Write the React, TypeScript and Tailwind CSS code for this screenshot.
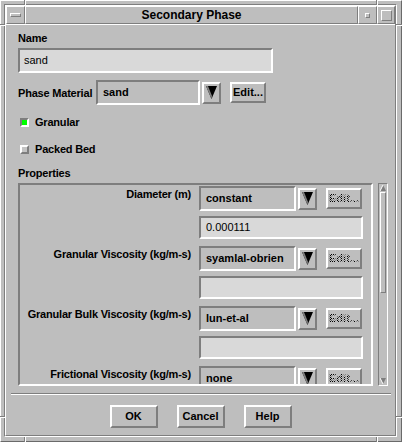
import React from "react"

// Motif-style bevels
const raised2 = "border-2 border-t-white border-l-white border-r-[#7e7e7e] border-b-[#7e7e7e]"
const sunken2 = "border-2 border-t-[#7e7e7e] border-l-[#7e7e7e] border-r-white border-b-white"
const raised1 = "border border-t-white border-l-white border-r-[#7e7e7e] border-b-[#7e7e7e]"
const sunken1 = "border border-t-[#7e7e7e] border-l-[#7e7e7e] border-r-white border-b-white"

const stipple =
  "bg-[repeating-conic-gradient(#000_0%_25%,transparent_0%_50%)] bg-[length:2px_2px] bg-clip-text text-transparent"

function ArrowButton() {
  return (
    <div className={`w-[19px] h-[22px] ${raised2} flex items-center justify-center`}>
      <svg width="11" height="13" viewBox="0 0 11 13">
        <polygon points="0,0 11,0 5.5,13" fill="#000" />
        <polygon points="0,0 2,0 6,10 5.5,13" fill="#7e7e7e" />
      </svg>
    </div>
  )
}

function EditButton({ disabled }: { disabled?: boolean }) {
  return (
    <div
      className={`w-[36px] h-[21px] ${raised2} flex items-center justify-center text-[11px] font-bold leading-none`}
    >
      <span className={disabled ? stipple : ""}>Edit...</span>
    </div>
  )
}

const rows = [
  { label: "Diameter (m)", value: "constant", field: "0.000111" },
  { label: "Granular Viscosity (kg/m-s)", value: "syamlal-obrien", field: "" },
  { label: "Granular Bulk Viscosity (kg/m-s)", value: "lun-et-al", field: "" },
  { label: "Frictional Viscosity (kg/m-s)", value: "none", field: "" },
]

function Tick({ className }: { className: string }) {
  return <div className={`absolute ${className}`} />
}

export default function App() {
  return (
    <div className="relative w-[402px] h-[442px] bg-[#bebebe] border border-t-white border-l-white border-r-[#6a6a6a] border-b-[#6a6a6a] pt-[3px] pl-[3px] pr-[4px] pb-[4px] font-['Liberation_Sans',Arial,Helvetica,sans-serif] text-black select-none">
      {/* frame corner ticks */}
      <Tick className="-top-px left-[23px] w-[2px] h-[5px] border-l border-l-[#7e7e7e] border-r border-r-white" />
      <Tick className="-top-px left-[375px] w-[2px] h-[5px] border-l border-l-[#7e7e7e] border-r border-r-white" />
      <Tick className="-bottom-px left-[23px] w-[2px] h-[5px] border-l border-l-[#7e7e7e] border-r border-r-white" />
      <Tick className="-bottom-px left-[375px] w-[2px] h-[5px] border-l border-l-[#7e7e7e] border-r border-r-white" />
      <Tick className="-left-px top-[23px] h-[2px] w-[5px] border-t border-t-[#7e7e7e] border-b border-b-white" />
      <Tick className="-right-px top-[23px] h-[2px] w-[6px] border-t border-t-[#7e7e7e] border-b border-b-white" />
      <Tick className="-left-px top-[415px] h-[2px] w-[5px] border-t border-t-[#7e7e7e] border-b border-b-white" />
      <Tick className="-right-px top-[415px] h-[2px] w-[6px] border-t border-t-[#7e7e7e] border-b border-b-white" />

      <div className="h-full border border-t-[#7e7e7e] border-l-[#7e7e7e] border-r-white border-b-white">
        <div className="h-full flex flex-col border border-t-white border-l-white border-r-[#7e7e7e] border-b-[#7e7e7e]">
          {/* Title bar */}
          <div className="flex h-[18px] shrink-0">
            <div className={`w-[19px] ${raised1} flex items-center justify-center`}>
              <div className={`w-[11px] h-[4px] ${raised1}`} />
            </div>
            <div className={`flex-1 ${raised1} flex items-center justify-center text-[12px] font-bold`}>
              Secondary Phase
            </div>
            <div className={`w-[19px] ${raised1} flex items-center justify-center`}>
              <div className={`w-[5px] h-[5px] ${raised1}`} />
            </div>
            <div className={`w-[18px] ${raised1} flex items-center justify-center`}>
              <div className={`w-[11px] h-[11px] ${raised1}`} />
            </div>
          </div>

          {/* Client area */}
          <div className="flex-1 flex flex-col border-t border-t-white">
            <div className="pl-[12px] pt-[6px] flex flex-col">
              <div className="text-[11px] font-bold leading-[14px] tracking-[-0.2px]">Name</div>
              <div className={`mt-[3px] w-[255px] h-[25px] ${sunken2} bg-[#d9d9d9] flex items-center pl-[4px] text-[11px]`}>
                sand
              </div>

              {/* Phase material */}
              <div className="mt-[7px] flex items-center h-[25px]">
                <span className="text-[11px] font-bold leading-[14px] tracking-[-0.2px] w-[78px]">Phase Material</span>
                <div className={`w-[104px] h-[25px] ${sunken2} flex items-center pl-[5px] text-[11px] font-bold`}>
                  sand
                </div>
                <div className="ml-[2px]">
                  <ArrowButton />
                </div>
                <div className="ml-[9px]">
                  <EditButton />
                </div>
              </div>

              {/* Toggles */}
              <div className="mt-[10px] h-[14px] flex items-center pl-[2px]">
                <div className={`w-[9px] h-[9px] ${sunken2} bg-[#00ff00]`} />
                <span className="ml-[6px] text-[11px] font-bold tracking-[-0.2px]">Granular</span>
              </div>
              <div className="mt-[13px] h-[14px] flex items-center pl-[2px]">
                <div className={`w-[9px] h-[9px] ${raised2} bg-[#c4c4c4]`} />
                <span className="ml-[6px] text-[11px] font-bold tracking-[-0.2px]">Packed Bed</span>
              </div>

              <div className="mt-[10px] text-[11px] font-bold leading-[14px] tracking-[-0.2px]">Properties</div>

              {/* Properties panel + scrollbar */}
              <div className="mt-[3px] flex">
                <div className={`w-[355px] h-[203px] ${sunken2} overflow-hidden`}>
                  <div className="pt-[1px] flex flex-col gap-[7px]">
                    {rows.map((r) => (
                      <div key={r.label} className="flex items-start">
                        <div className="w-[171px] pt-[1px] text-right text-[11px] font-bold leading-[14px] tracking-[-0.2px] whitespace-nowrap">
                          {r.label}
                        </div>
                        <div className="ml-[8px] flex flex-col">
                          <div className="flex items-center">
                            <div className={`w-[97px] h-[25px] ${sunken2} flex items-center pl-[5px] text-[11px] font-bold`}>
                              {r.value}
                            </div>
                            <div className="ml-[2px]">
                              <ArrowButton />
                            </div>
                            <div className="ml-[9px]">
                              <EditButton disabled />
                            </div>
                          </div>
                          <div className={`mt-[5px] w-[164px] h-[23px] ${sunken2} bg-[#d9d9d9] flex items-center pl-[5px] text-[11px]`}>
                            {r.field}
                          </div>
                        </div>
                      </div>
                    ))}
                  </div>
                </div>

                <div className={`ml-[5px] w-[10px] h-[203px] ${sunken1} flex flex-col`}>
                  <div className="h-[8px] flex items-center justify-center">
                    <svg width="6" height="6" viewBox="0 0 6 6">
                      <polygon points="3,0 6,6 0,6" fill="#7e7e7e" />
                      <line x1="3" y1="0" x2="0" y2="6" stroke="#fff" strokeWidth="1" />
                    </svg>
                  </div>
                  <div className={`mx-px h-[101px] ${raised1}`} />
                  <div className="flex-1" />
                  <div className="h-[8px] flex items-center justify-center">
                    <svg width="6" height="6" viewBox="0 0 6 6">
                      <polygon points="0,0 6,0 3,6" fill="#7e7e7e" />
                      <line x1="0" y1="0" x2="3" y2="6" stroke="#fff" strokeWidth="1" />
                    </svg>
                  </div>
                </div>
              </div>
            </div>

            {/* Separator */}
            <div className="mt-[7px] ml-[5px] w-[380px] border-t border-t-[#7e7e7e] border-b border-b-white" />

            {/* Buttons */}
            <div className="mt-[10px] flex justify-center gap-[19px]">
              {["OK", "Cancel", "Help"].map((b) => (
                <div
                  key={b}
                  className={`w-[48px] h-[23px] ${raised2} flex items-center justify-center text-[11px] font-bold`}
                >
                  {b}
                </div>
              ))}
            </div>
          </div>
        </div>
      </div>
    </div>
  )
}
